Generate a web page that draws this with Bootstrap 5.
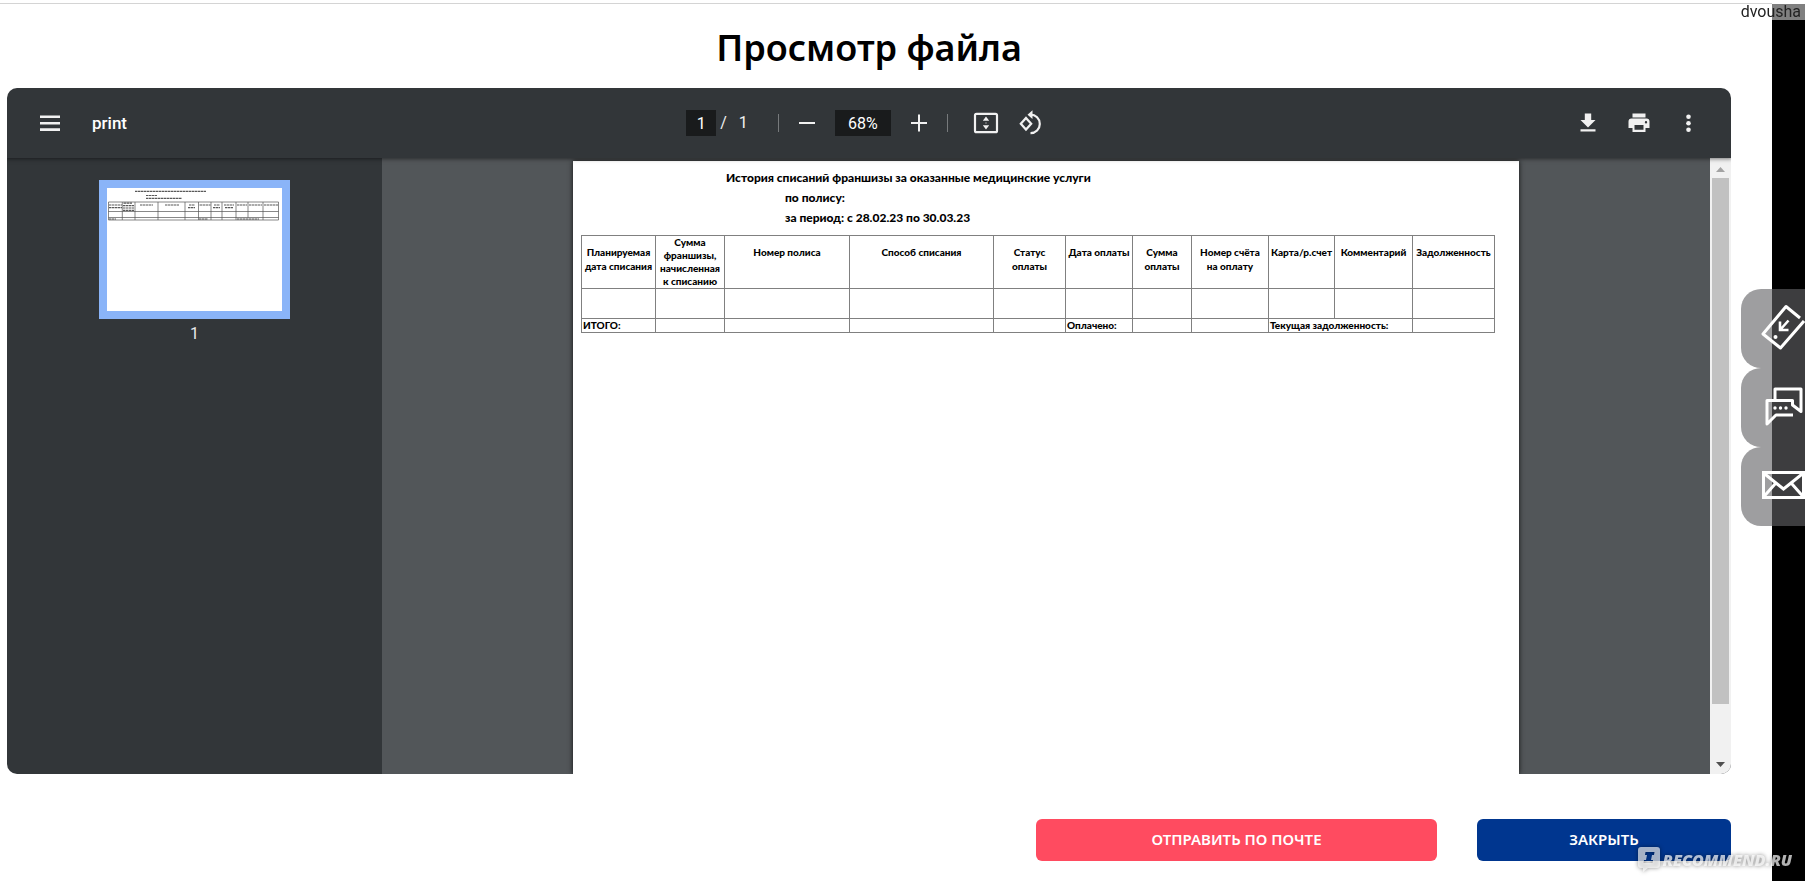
<!DOCTYPE html>
<html lang="ru">
<head>
<meta charset="utf-8">
<meta name="viewport" content="width=device-width, initial-scale=1">
<title>Просмотр файла</title>
<link href="https://cdn.jsdelivr.net/npm/bootstrap@5.3.0/dist/css/bootstrap.min.css" rel="stylesheet">
<style>
  body { font-family: "Noto Sans", sans-serif; background: #fff; color: #000; overflow: hidden; }
  .shell { min-height: 100vh; border-top: 3px solid #fff; }
  .pane { border-top: 1px solid #d4d4d4; padding: 0 41px 20px 7px; }
  .edge-strip { width: 33px; background: #000; margin-top: 1px; }
  .pane-title { font-size: 36px; line-height: 44px; font-weight: 600; padding: 22px 0 18px; margin: 0; }

  .viewer { height: calc(100vh - 195px); min-height: 420px; border-radius: 10px; font-family: Roboto, sans-serif; background: #323639; }
  .toolbar { display: grid; grid-template-columns: 1fr auto 1fr; height: 70px; color: #f1f1f1; font-size: 16px; padding: 0 31px; box-shadow: 0 0 4px 1px rgba(0,0,0,.5); z-index: 2; }
  .toolbar button { border: 0; padding: 0; background: none; color: inherit; display: flex; }
  .toolbar .file-name { font-weight: 500; font-size: 17px; line-height: 24px; color: #fff; margin-left: 30px; }
  .toolbar input { border: 0; background: #191b1c; color: #fff; height: 26px; text-align: center; padding: 0; }
  .page-box { width: 30px; }
  .zoom-box { width: 56px; }
  .rule { width: 1px; height: 18px; background: #777a7c; }
  .rule-first { margin-left: 30px; }
  .thumbs { width: 375px; color: #e8eaed; font-size: 16px; line-height: 22px; padding-top: 22px; }
  .thumb { width: 191px; border: 8px solid #8ab4f8; background: #fff; }
  .canvas { background: #525659; }
  .sheet { width: 946px; margin-top: 3px; background: #fff; box-shadow: 0 0 5px rgba(0,0,0,.8); font-family: Lato, "Noto Sans", sans-serif; font-weight: 900; }
  .sheet-head { font-size: 12px; line-height: 20px; padding: 7px 0 0 153px; }
  .sheet-head h2 { font-size: inherit; line-height: 20px; font-weight: 900; margin: 0; }
  .sheet-head div { padding-left: 59px; }
  .ledger { width: 913px; margin: 7px 0 0 8px; table-layout: fixed; border-collapse: collapse; font-size: 10px; line-height: 14px; }
  .ledger th, .ledger td { border: 1px solid #808080; padding: 0; white-space: nowrap; font-weight: 900; vertical-align: top; }
  .ledger th { text-align: center; height: 53px; padding-top: 9px; }
  .ledger th.tall { padding-top: 0; line-height: 13px; }
  .ledger td { height: 30px; }
  .ledger tfoot td { height: 14px; line-height: 12px; padding-left: 1px; }
  .scroll-rail { width: 21px; background: #f1f1f1; padding: 0 2px; }
  .scroll-rail .thumb-bar { flex: 0 1 526px; background: #c1c1c1; }
  .scroll-rail svg { height: 20px; flex: none; }

  .actions { padding-top: 45px; gap: 40px; }
  .actions .btn { height: 42px; border: 0; border-radius: 6px; color: #fff; font-size: 15px; line-height: 24px; font-weight: 600; padding: 0 0 2px; }
  .btn-send, .btn-send:hover { width: 401px; background: #ff4b60; }
  .btn-shut, .btn-shut:hover { width: 254px; background: #00368f; }

  .side-tabs { top: 289px; right: 0; z-index: 5; }
  .side-tabs a { width: 64px; height: 79px; padding-bottom: 3px; background: rgba(98,99,102,.62); border-radius: 20px 0 0 20px; display: flex; align-items: center; justify-content: flex-end; }
  .user-tag { top: 4px; right: 0; height: 16px; background: rgba(255,255,255,.5); color: #222; font: 400 16px/15px Roboto, sans-serif; padding: 0 4px 0 5px; z-index: 5; }
  .stamp { right: 13px; bottom: 8px; z-index: 5; color: rgba(255,255,255,.7); font: italic 800 16px/16px "Open Sans", sans-serif; gap: 2px; filter: drop-shadow(0 0 2px rgba(0,0,0,.65)); }
</style>
</head>
<body>
<div class="shell d-flex">
  <main class="pane flex-grow-1 d-flex flex-column">
    <h1 class="pane-title text-center">Просмотр файла</h1>

    <section class="viewer d-flex flex-column overflow-hidden" aria-label="Документ">
      <header class="toolbar align-items-center flex-shrink-0 position-relative">
        <div class="d-flex align-items-center">
          <button type="button" aria-label="Меню"><svg width="24" height="24" viewBox="0 0 24 24" fill="currentColor"><path d="M2 4.500h20v2.600H2zM2 11h20v2.500H2zM2 17.300h20v2.600H2z"/></svg></button>
          <span class="file-name">print</span>
        </div>
        <div class="d-flex align-items-center me-2">
          <input class="page-box" type="text" value="1" aria-label="Страница">
          <span class="ms-1">/</span><span class="ms-2 ps-1">1</span>
          <span class="rule rule-first me-3"></span>
          <button type="button" aria-label="Уменьшить"><svg width="24" height="24" viewBox="0 0 24 24" fill="currentColor"><path d="M4 11h16v2H4z"/></svg></button>
          <input class="zoom-box mx-3" type="text" value="68%" aria-label="Масштаб">
          <button type="button" aria-label="Увеличить"><svg width="24" height="24" viewBox="0 0 24 24" fill="currentColor"><path d="M4 11h7V3.500h2V11h7v2h-7v7.500h-2V13H4z"/></svg></button>
          <span class="rule ms-3 me-4"></span>
          <button type="button" aria-label="По размеру страницы"><svg width="28" height="24" viewBox="0 0 28 24" fill="currentColor"><rect x="3" y="2.800" width="22" height="18.400" rx="1.500" fill="none" stroke="currentColor" stroke-width="2.200"/><path d="M14 5.500l3.200 4.300h-6.400zM14 18.500l-3.200-4.300h6.400z"/><path d="M13.500 11.500h1v1h-1z"/></svg></button>
          <button type="button" class="ms-3" aria-label="Повернуть"><svg width="28" height="26" viewBox="0 0 28 26" fill="none" stroke="currentColor" stroke-width="2.200"><path d="M10 8l5.200 5.800-5.200 5.800-5.200-5.800z"/><path d="M14.500 4.600a9.300 9.300 0 1 1 0 18.600"/><path d="M16.500.3v8.800L11.500 4.700z" fill="currentColor" stroke="none"/></svg></button>
        </div>
        <div class="d-flex align-items-center justify-content-end">
          <button type="button" aria-label="Скачать"><svg width="26" height="24" viewBox="0 0 26 24" fill="currentColor"><path d="M8.800 2.500h6.400V9H19.500L12 16.500 4.500 9h4.300zM4.500 18.300h15v2.300h-15z"/></svg></button>
          <button type="button" class="mx-4" aria-label="Печать"><svg width="26" height="24" viewBox="0 0 26 24" fill="currentColor"><path d="M6.500 2.500h13v4h-13z"/><path fill-rule="evenodd" d="M5.500 7.500h15a3 3 0 0 1 3 3v6.500h-4v4h-13v-4h-4v-6.500a3 3 0 0 1 3-3zm3 6.500v4.800h9V14zm11.500-4a1.200 1.200 0 1 0 0 2.400 1.200 1.200 0 0 0 0-2.400z"/></svg></button>
          <button type="button" aria-label="Ещё"><svg width="24" height="24" viewBox="0 0 24 24" fill="currentColor"><circle cx="12.500" cy="5.700" r="2.300"/><circle cx="12.500" cy="12.200" r="2.300"/><circle cx="12.500" cy="18.700" r="2.300"/></svg></button>
        </div>
      </header>

      <div class="d-flex flex-grow-1 overflow-hidden">
        <aside class="thumbs d-flex flex-column align-items-center flex-shrink-0">
          <svg class="thumb" viewBox="0 0 175 123" role="img" aria-label="Миниатюра страницы 1">
            <g stroke="#555" stroke-width=".7" fill="none"><path d="M1.500 14h170v18h-170zM1.500 23.500h170M1.500 29.500h170M15.300 14v18M28 14v18M51 14v18M78 14v18M91.500 14v18M104 14v18M115 14v18M129 14v18M141 14v9.500M141 23.500v6M156 14v18"/></g>
            <g stroke="#222" stroke-width="1.200" stroke-dasharray="2.500 .5" opacity=".75" fill="none"><path d="M28 3.300h71M39 7.500h11M39 10.300h36M2 17h13M2 19.700h13M16.500 15.200h9M16 17.700h11M16 20h11M16 22.300h11M33 17h13M58 17h14M82 17h6M81 19.700h7M92.500 17h11M107 17h6M106 19.700h7M117 17h10M118 19.700h8M130 17h10M142 17h13M157 17h14M2 31h7M92 31h9M130 31h22"/></g>
          </svg>
          <span class="mt-1">1</span>
        </aside>
        <div class="canvas flex-grow-1 d-flex justify-content-center overflow-hidden">
          <article class="sheet flex-shrink-0">
            <div class="sheet-head">
              <h2>История списаний франшизы за оказанные медицинские услуги</h2>
              <div>по полису:</div>
              <div>за период: с 28.02.23 по 30.03.23</div>
            </div>
            <table class="ledger">
              <colgroup><col style="width:74px"><col style="width:69px"><col style="width:125px"><col style="width:144px"><col style="width:72px"><col style="width:67px"><col style="width:59px"><col style="width:77px"><col style="width:66px"><col style="width:78px"><col style="width:82px"></colgroup>
              <thead><tr>
                <th>Планируемая<br>дата списания</th><th class="tall">Сумма<br>франшизы,<br>начисленная<br>к списанию</th><th>Номер полиса</th><th>Способ списания</th><th>Статус<br>оплаты</th><th>Дата оплаты</th><th>Сумма<br>оплаты</th><th>Номер счёта<br>на оплату</th><th>Карта/р.счет</th><th>Комментарий</th><th>Задолженность</th>
              </tr></thead>
              <tbody><tr><td></td><td></td><td></td><td></td><td></td><td></td><td></td><td></td><td></td><td></td><td></td></tr></tbody>
              <tfoot><tr><td>ИТОГО:</td><td></td><td></td><td></td><td></td><td>Оплачено:</td><td></td><td></td><td colspan="2">Текущая задолженность:</td><td></td></tr></tfoot>
            </table>
          </article>
        </div>
        <div class="scroll-rail d-flex flex-column flex-shrink-0">
          <svg viewBox="0 0 17 20" fill="#a3a3a3"><path d="M8.500 9l4.500 5H4z"/></svg>
          <div class="thumb-bar"></div>
          <svg class="mt-auto" viewBox="0 0 17 20" fill="#505050"><path d="M8.500 13L4 8h9z"/></svg>
        </div>
      </div>
    </section>

    <div class="actions d-flex justify-content-end">
      <button type="button" class="btn btn-send">ОТПРАВИТЬ ПО ПОЧТЕ</button>
      <button type="button" class="btn btn-shut">ЗАКРЫТЬ</button>
    </div>
  </main>
  <div class="edge-strip flex-shrink-0"></div>
</div>

<nav class="side-tabs position-fixed" aria-label="Связь">
  <a href="#" aria-label="Оплата"><svg width="46" height="48" viewBox="0 0 46 48" fill="none" stroke="#fff" stroke-width="3"><path d="M41 15L27 3.500 4 31l17.500 14L45 18" stroke-linejoin="round"/><path d="M29.500 17.500l-8 9M21 18.500v8.500h8.500" stroke-width="2.600"/><circle cx="16.500" cy="34" r="2" fill="#fff" stroke="none"/></svg></a>
  <a href="#" aria-label="Чат"><svg width="44" height="42" viewBox="0 0 44 42" fill="none" stroke="#fff" stroke-width="3"><path d="M14 14V4h26v22.500L31.500 20v-4.500H6V39l9-9h17" stroke-linejoin="round"/><g fill="#fff" stroke="none"><circle cx="14" cy="23" r="1.700"/><circle cx="19.500" cy="23" r="1.700"/><circle cx="25" cy="23" r="1.700"/></g></svg></a>
  <a href="#" aria-label="Почта"><svg width="44" height="30" viewBox="0 0 44 30" fill="none" stroke="#fff" stroke-width="3"><path d="M2.500 2.500h40v25h-40zM2.500 3L22.500 19 42.500 3M2.500 27L14 14M42.500 27L31 14"/></svg></a>
</nav>
<div class="user-tag position-fixed">dvousha</div>
<div class="stamp position-fixed d-flex align-items-center">
  <svg width="24" height="27" viewBox="0 0 24 27"><path fill="#fff" fill-opacity=".65" fill-rule="evenodd" d="M4 1h16a3 3 0 0 1 3 3v15a3 3 0 0 1-3 3H11l-5 4v-4H4a3 3 0 0 1-3-3V4a3 3 0 0 1 3-3zm4.500 5L8 9h2l-1 5H7l-.5 3h9l.5-3h-2l1-5h2l.5-3z"/></svg>
  <span>RECOMMEND.RU</span>
</div>
<script src="https://cdn.jsdelivr.net/npm/bootstrap@5.3.0/dist/js/bootstrap.bundle.min.js"></script>
</body>
</html>
